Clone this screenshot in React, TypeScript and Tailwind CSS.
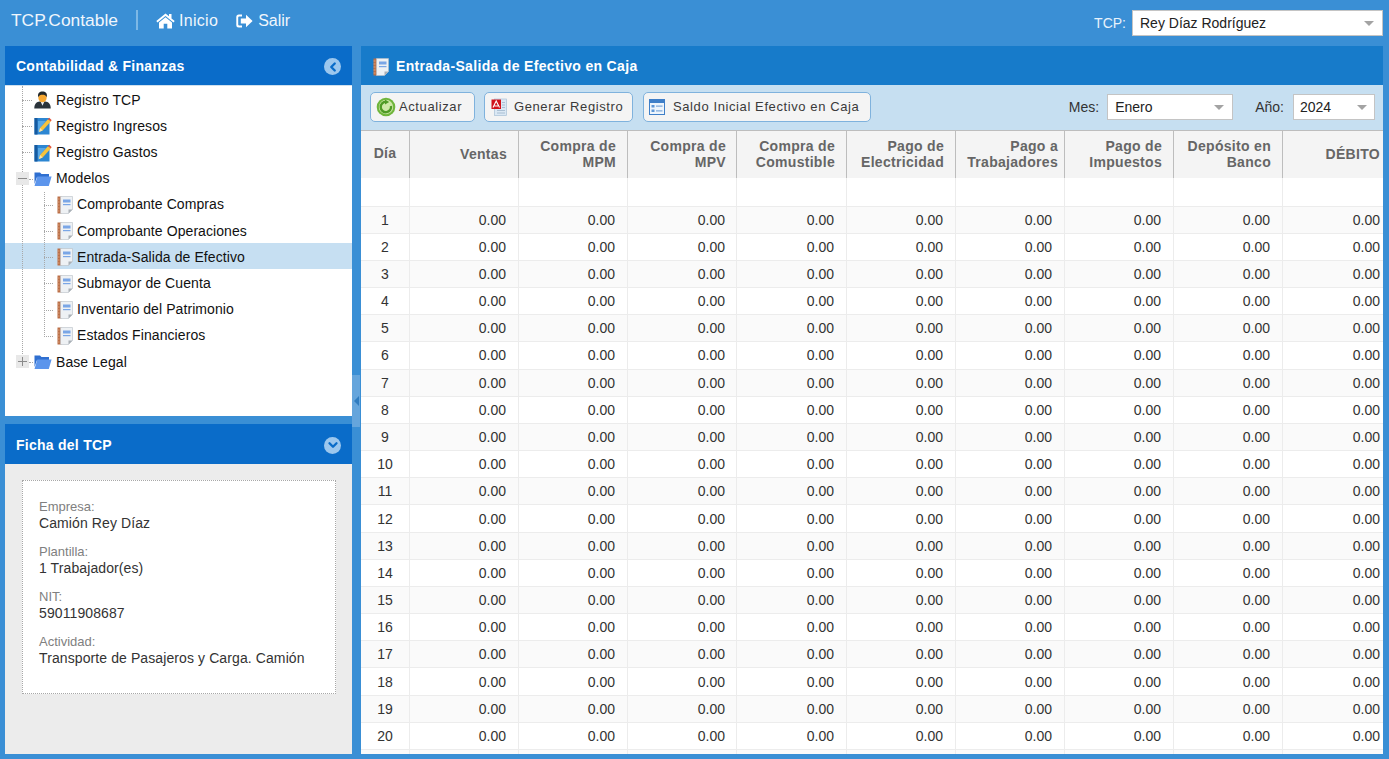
import React from "react";
import { ChevronLeft, ChevronDown } from "lucide-react";

const columns = [
  { title: ["Ventas"], w: "w-[109px]", head: "pr-[11px]", cell: "pr-[12px]" },
  { title: ["Compra de", "MPM"], w: "w-[109px]", head: "pr-[11px]", cell: "pr-[12px]" },
  { title: ["Compra de", "MPV"], w: "w-[109px]", head: "pr-[10px]", cell: "pr-[11px]" },
  { title: ["Compra de", "Comustible"], w: "w-[110px]", head: "pr-[11px]", cell: "pr-[12px]" },
  { title: ["Pago de", "Electricidad"], w: "w-[109px]", head: "pr-[11px]", cell: "pr-[12px]" },
  { title: ["Pago a", "Trabajadores"], w: "w-[109px]", head: "pr-[6px]", cell: "pr-[12px]" },
  { title: ["Pago de", "Impuestos"], w: "w-[109px]", head: "pr-[11px]", cell: "pr-[12px]" },
  { title: ["Depósito en", "Banco"], w: "w-[109px]", head: "pr-[11px]", cell: "pr-[12px]" },
  { title: ["DÉBITO"], w: "w-[101px]", head: "pr-[4px]", cell: "pr-[4px]" },
];

const rows = Array.from({ length: 20 }, (_, i) => i + 1);

function HomeIcon() {
  return (
    <svg width="19" height="16" viewBox="0 0 19 16" fill="#fff">
      <path d="M9.5 0.5 L0.3 8 L1.5 9.4 L9.5 2.9 L17.5 9.4 L18.7 8 L15.5 5.4 V1 H13 V3.3 Z" />
      <path d="M9.5 4.2 L3 9.5 V15.5 H7.7 V10.8 H11.3 V15.5 H16 V9.5 Z" />
    </svg>
  );
}

function ExitIcon() {
  return (
    <svg width="17" height="14" viewBox="0 0 17 14" fill="#fff">
      <path d="M6 0.5 H2.8 A2.5 2.5 0 0 0 0.3 3 V11 A2.5 2.5 0 0 0 2.8 13.5 H6 V11.5 H3.2 A1 1 0 0 1 2.2 10.5 V3.5 A1 1 0 0 1 3.2 2.5 H6 Z" />
      <path d="M10 0.8 L16.6 7 L10 13.2 V9.6 H4.8 V4.4 H10 Z" />
    </svg>
  );
}

function UserIcon() {
  return (
    <svg width="17" height="18" viewBox="0 0 18 19">
      <path d="M0.3 18.5 C0.3 13 3 11.5 6 11 H12 C15 11.5 17.7 13 17.7 18.5 Z" fill="#2b343b" />
      <path d="M7 11 L9 15.5 L11 11 Z" fill="#eef2f5" />
      <ellipse cx="9" cy="7" rx="4.4" ry="5" fill="#f7a832" />
      <path d="M4.4 6.5 C3.6 2 6 0.5 9 0.5 C12 0.5 14.4 2 13.6 6.5 C12.5 4.5 11 4 9 4 C7 4 5.5 4.5 4.4 6.5 Z" fill="#22282c" />
    </svg>
  );
}

function PencilBookIcon() {
  return (
    <svg width="18" height="18" viewBox="0 0 18 18">
      <rect x="0.5" y="1" width="15" height="16.5" fill="#2c86d2" />
      <rect x="0.5" y="1" width="3" height="16.5" fill="#175a9f" />
      <path d="M4 4 H12 L6 11 L4.5 15.5 H4 Z" fill="#58a8e6" />
      <path d="M5 15 L6 11 L14 2.2 L16.8 4.6 L8.6 13.4 Z" fill="#f7c33c" />
      <path d="M14 2.2 L15.2 0.8 L17.6 3 L16.8 4.6 Z" fill="#e5533d" />
      <path d="M5 15 L6 11 L8.6 13.4 Z" fill="#f7e2b0" />
    </svg>
  );
}

function FolderIcon() {
  return (
    <svg width="18" height="16" viewBox="0 0 18 16">
      <path d="M0.5 1.5 H6 L7.5 3 H15 V6 H3 L0.5 13 Z" fill="#2f6fd0" />
      <path d="M3.3 5.5 H17.6 L14.8 15 H0.5 Z" fill="#5c95ec" />
    </svg>
  );
}

function NoteIcon() {
  return (
    <svg width="16" height="18" viewBox="0 0 16 18">
      <rect x="0.5" y="0.5" width="4" height="17" fill="#bb7048" />
      <path d="M0.5 3 H2.5 M0.5 6 H2.5 M0.5 9 H2.5 M0.5 12 H2.5 M0.5 15 H2.5" stroke="#dfa988" strokeWidth="0.8" />
      <path d="M3.5 0.5 H15.5 V13.5 L11.5 17.5 H3.5 Z" fill="#eef1f4" stroke="#b8bfc6" strokeWidth="0.6" />
      <rect x="6" y="3.5" width="7.5" height="3" fill="#7aa6e6" />
      <rect x="6" y="8" width="7.5" height="1.2" fill="#7aa6e6" />
      <path d="M11.5 17.5 L15.5 13.5 H11.5 Z" fill="#a9b0b6" />
    </svg>
  );
}

function RefreshIcon() {
  return (
    <svg width="20" height="20" viewBox="0 0 20 20">
      <circle cx="10" cy="10" r="9.3" fill="#6fb53c" />
      <circle cx="10" cy="10" r="7.2" fill="#cfe8a8" />
      <path d="M10 4.8 A5.2 5.2 0 1 0 15 9" fill="none" stroke="#4f9a26" strokeWidth="2.4" />
      <path d="M9 2.6 L13.2 5 L9 7.4 Z" fill="#4f9a26" />
    </svg>
  );
}

function PdfIcon() {
  return (
    <svg width="16" height="18" viewBox="0 0 16 18">
      <rect x="3.5" y="1" width="12" height="16.5" fill="#dbe8f4" stroke="#a9c0d6" strokeWidth="0.7" />
      <path d="M11 4.5 H14 M11 7 H14 M11 9.5 H14 M6 12.5 H14 M6 15 H14" stroke="#9db4ca" strokeWidth="0.8" />
      <rect x="0.5" y="1.5" width="9.5" height="9.5" fill="#d0121b" />
      <path d="M2 9.5 L5.2 3 L8.5 9.5 M3.4 8 H7" fill="none" stroke="#fff" strokeWidth="1.1" />
    </svg>
  );
}

function FormIcon() {
  return (
    <svg width="16" height="16" viewBox="0 0 16 16">
      <rect x="0.5" y="0.5" width="15" height="15" fill="#eef5fc" stroke="#3f7fc8" />
      <rect x="0.5" y="0.5" width="15" height="3.5" fill="#3f7fc8" />
      <rect x="2.5" y="6" width="3" height="2.5" fill="#5f97d6" />
      <rect x="2.5" y="10.5" width="3" height="2.5" fill="#5f97d6" />
      <path d="M7 7.2 H13.5 M7 11.8 H13.5" stroke="#7fa9da" strokeWidth="1.3" />
    </svg>
  );
}

function ComboArrow() {
  return <span className="h-0 w-0 border-x-[5px] border-t-[5px] border-x-transparent border-t-[#a3a3a3]" />;
}

function Combo({ value, className }: { value: string; className: string }) {
  return (
    <div className={`flex h-[26px] items-center justify-between border border-[#c4c4c4] bg-white text-[14px] text-[#222] ${className}`}>
      <span>{value}</span>
      <ComboArrow />
    </div>
  );
}

function ToolButton({ icon, label, className }: { icon: React.ReactNode; label: string; className: string }) {
  return (
    <button className={`flex h-[30px] items-center rounded-[5px] border border-[#7fb2dd] bg-[#f4f4f4] text-[13px] tracking-[0.6px] text-[#3a3a3a] ${className}`}>
      {icon}
      <span>{label}</span>
    </button>
  );
}

// dotted connector pieces of the tree
function TreeRow({ depth, icon, label, toggle, active }: { depth: number; icon: React.ReactNode; label: string; toggle?: "plus" | "minus"; active?: boolean }) {
  return (
    <div className={`relative flex h-[26.21px] items-center pt-[2px] ${active ? "bg-[#c6dff2]" : ""}`}>
      <div className={depth === 0 ? "w-[29px] shrink-0" : "w-[52px] shrink-0"} />
      {toggle && (
        <span className="absolute left-[11px] top-[7px] z-10 h-[13px] w-[13px] bg-[#e8e8e8]">
          <span className="absolute left-[2px] top-[6px] h-px w-[9px] bg-[#8a8a8a]" />
          {toggle === "plus" && <span className="absolute left-[6px] top-[2px] h-[9px] w-px bg-[#8a8a8a]" />}
        </span>
      )}
      <span
        className={`absolute top-[14px] border-t border-dotted border-[#a8a8a8] ${
          toggle ? "left-[24px] w-[4px]" : depth === 0 ? "left-[17px] w-[10px]" : "left-[39px] w-[9px]"
        }`}
      />
      <span className={`flex shrink-0 items-center ${depth === 0 ? "w-[22px]" : "w-[20px]"}`}>{icon}</span>
      <span className="text-[14px] tracking-[0.08px] text-[#111]">{label}</span>
    </div>
  );
}

function FichaItem({ label, value }: { label: string; value: string }) {
  return (
    <div className="mb-[13px] leading-[16px]">
      <div className="text-[13px] text-[#808080]">{label}</div>
      <div className="text-[14px] tracking-[0.1px] text-[#333]">{value}</div>
    </div>
  );
}

function PanelTitle({ title, tall, children }: { title: string; tall?: boolean; children: React.ReactNode }) {
  return (
    <div className={`flex shrink-0 items-center justify-between bg-[#0a6cc9] pl-[11px] pr-[11px] text-[14px] font-bold tracking-[0.26px] text-white ${tall ? "h-[40px] pt-[2px]" : "h-[39px] pt-[2px]"}`}>
      <span>{title}</span>
      {children}
    </div>
  );
}

export default function App() {
  return (
    <div className="flex h-[759px] w-[1389px] flex-col overflow-hidden bg-[#3a8fd5] font-['Liberation_Sans',Arial,sans-serif]">
      {/* Top bar */}
      <div className="flex h-[46px] shrink-0 items-start justify-between pl-[11px] pr-[6px]">
        <div className="flex h-[41px] items-center text-white">
          <span className="text-[17.4px] text-[#f0f6fc]">TCP.Contable</span>
          <span className="ml-[18px] h-[20px] w-[2px] -translate-y-[1px] bg-[#7db8e6]" />
          <span className="ml-[18px] flex items-center gap-[4px] text-[16px] tracking-[0.3px] text-[#f0f6fc]">
            <HomeIcon /> Inicio
          </span>
          <span className="ml-[18px] flex items-center gap-[5px] text-[16px] text-[#f0f6fc]">
            <ExitIcon /> Salir
          </span>
        </div>
        <div className="mt-[10px] flex items-center text-[14px] text-[#e8f2fb]">
          <span className="mr-[6px]">TCP:</span>
          <Combo value="Rey Díaz Rodríguez" className="w-[251px] pl-[7px] pr-[8px]" />
        </div>
      </div>

      <div className="flex min-h-0 flex-1 pb-[5px] pl-[5px] pr-[6px]">
        {/* Left column */}
        <div className="flex w-[347px] shrink-0 flex-col">
          <div className="flex h-[370px] shrink-0 flex-col">
            <PanelTitle title="Contabilidad & Finanzas">
              <span className="flex h-[17px] w-[17px] items-center justify-center rounded-full bg-[#9cc7ee]">
                <ChevronLeft size={14} strokeWidth={4} color="#0a6cc9" />
              </span>
            </PanelTitle>
            <div className="relative flex-1 border-t border-[#cfe0ee] bg-white">
              <TreeRow depth={0} icon={<UserIcon />} label="Registro TCP" />
              <TreeRow depth={0} icon={<PencilBookIcon />} label="Registro Ingresos" />
              <TreeRow depth={0} icon={<PencilBookIcon />} label="Registro Gastos" />
              <TreeRow depth={0} icon={<FolderIcon />} label="Modelos" toggle="minus" />
              <TreeRow depth={1} icon={<NoteIcon />} label="Comprobante Compras" />
              <TreeRow depth={1} icon={<NoteIcon />} label="Comprobante Operaciones" />
              <TreeRow depth={1} icon={<NoteIcon />} label="Entrada-Salida de Efectivo" active />
              <TreeRow depth={1} icon={<NoteIcon />} label="Submayor de Cuenta" />
              <TreeRow depth={1} icon={<NoteIcon />} label="Inventario del Patrimonio" />
              <TreeRow depth={1} icon={<NoteIcon />} label="Estados Financieros" />
              <TreeRow depth={0} icon={<FolderIcon />} label="Base Legal" toggle="plus" />
              <div className="absolute left-[17px] top-0 h-[276px] border-l border-dotted border-[#a8a8a8]" />
              <div className="absolute left-[39px] top-[106px] h-[143px] border-l border-dotted border-[#a8a8a8]" />
            </div>
          </div>
          <div className="mt-[8px] flex min-h-0 flex-1 flex-col bg-[#ececec]">
            <PanelTitle title="Ficha del TCP" tall>
              <span className="flex h-[17px] w-[17px] items-center justify-center rounded-full bg-[#9cc7ee]">
                <ChevronDown size={14} strokeWidth={4} color="#0a6cc9" />
              </span>
            </PanelTitle>
            <div className="ml-[17px] mr-[16px] mt-[16px] h-[214px] border border-dotted border-[#a8a8a8] bg-white pl-[16px] pt-[18px]">
              <FichaItem label="Empresa:" value="Camión Rey Díaz" />
              <FichaItem label="Plantilla:" value="1 Trabajador(es)" />
              <FichaItem label="NIT:" value="59011908687" />
              <FichaItem label="Actividad:" value="Transporte de Pasajeros y Carga. Camión" />
            </div>
          </div>
        </div>

        {/* Splitter */}
        <div className="relative w-[9px] shrink-0">
          <div className="absolute left-0 top-[329px] flex h-[52px] w-[8px] items-center justify-center bg-[#65a5dc]">
            <span className="h-0 w-0 border-y-[5px] border-r-[5px] border-y-transparent border-r-[#2f7cc0]" />
          </div>
        </div>

        {/* Main panel */}
        <div className="flex min-w-0 flex-1 flex-col overflow-hidden bg-white">
          <div className="flex h-[39px] shrink-0 items-center gap-[7px] bg-[#177bca] pl-[12px] pt-[2px] text-[14px] font-bold tracking-[0.33px] text-white">
            <NoteIcon />
            <span>Entrada-Salida de Efectivo en Caja</span>
          </div>
          <div className="flex h-[45px] shrink-0 items-center justify-between bg-[#c6dff1] pb-[1px] pl-[9px] pr-[8px]">
            <div className="flex items-center">
              <ToolButton icon={<RefreshIcon />} label="Actualizar" className="w-[105px] gap-[3px] pl-[5px]" />
              <ToolButton icon={<PdfIcon />} label="Generar Registro" className="ml-[9px] w-[149px] gap-[7px] pl-[6px]" />
              <ToolButton icon={<FormIcon />} label="Saldo Inicial Efectivo en Caja" className="ml-[10px] w-[228px] gap-[8px] pl-[5px]" />
            </div>
            <div className="flex items-center text-[14px] text-[#333]">
              <span className="mr-[8px]">Mes:</span>
              <Combo value="Enero" className="w-[126px] pl-[7px] pr-[8px]" />
              <span className="ml-[22px] mr-[9px]">Año:</span>
              <Combo value="2024" className="w-[82px] pl-[6px] pr-[7px]" />
            </div>
          </div>

          {/* Grid header */}
          <div className="flex h-[48px] shrink-0 border-t border-[#bdbdbd] bg-[#f4f4f4] text-[14px] font-bold leading-[16px] tracking-[0.3px] text-[#666]">
            <div className="flex w-[49px] shrink-0 items-center justify-center border-r border-[#bdbdbd] pb-[3px]">Día</div>
            {columns.map((c) => (
              <div
                key={c.title.join(" ")}
                className={`flex shrink-0 flex-col items-end justify-center border-r border-[#bdbdbd] pb-[2px] last:border-r-0 ${c.head} ${c.w}`}
              >
                {c.title.map((t) => (
                  <span key={t}>{t}</span>
                ))}
              </div>
            ))}
          </div>

          {/* Filter row */}
          <div className="flex h-[28.56px] shrink-0 border-b border-[#ececec]">
            <div className="w-[49px] shrink-0 border-r border-[#ececec]" />
            {columns.map((c) => (
              <div key={c.title.join(" ")} className={`shrink-0 border-r border-[#ececec] last:border-r-0 ${c.w}`} />
            ))}
          </div>

          {/* Rows */}
          {rows.map((r) => (
            <div key={r} className={`flex h-[27.18px] shrink-0 items-stretch border-b border-[#ececec] text-[14px] text-[#333] ${r % 2 === 1 ? "bg-[#fafafa]" : "bg-white"}`}>
              <div className="flex w-[49px] shrink-0 items-center justify-center border-r border-[#ececec] pt-[1px]">{r}</div>
              {columns.map((c) => (
                <div key={c.title.join(" ")} className={`flex shrink-0 items-center justify-end border-r border-[#ececec] pt-[1px] last:border-r-0 ${c.cell} ${c.w}`}>
                  0.00
                </div>
              ))}
            </div>
          ))}
          {/* partly visible last row, its text falls below the fold */}
          <div className="flex h-[27.18px] shrink-0 bg-[#fafafa]">
            <div className="w-[49px] shrink-0 border-r border-[#ececec]" />
            {columns.map((c) => (
              <div key={c.title.join(" ")} className={`shrink-0 border-r border-[#ececec] last:border-r-0 ${c.w}`} />
            ))}
          </div>
        </div>
      </div>
    </div>
  );
}
